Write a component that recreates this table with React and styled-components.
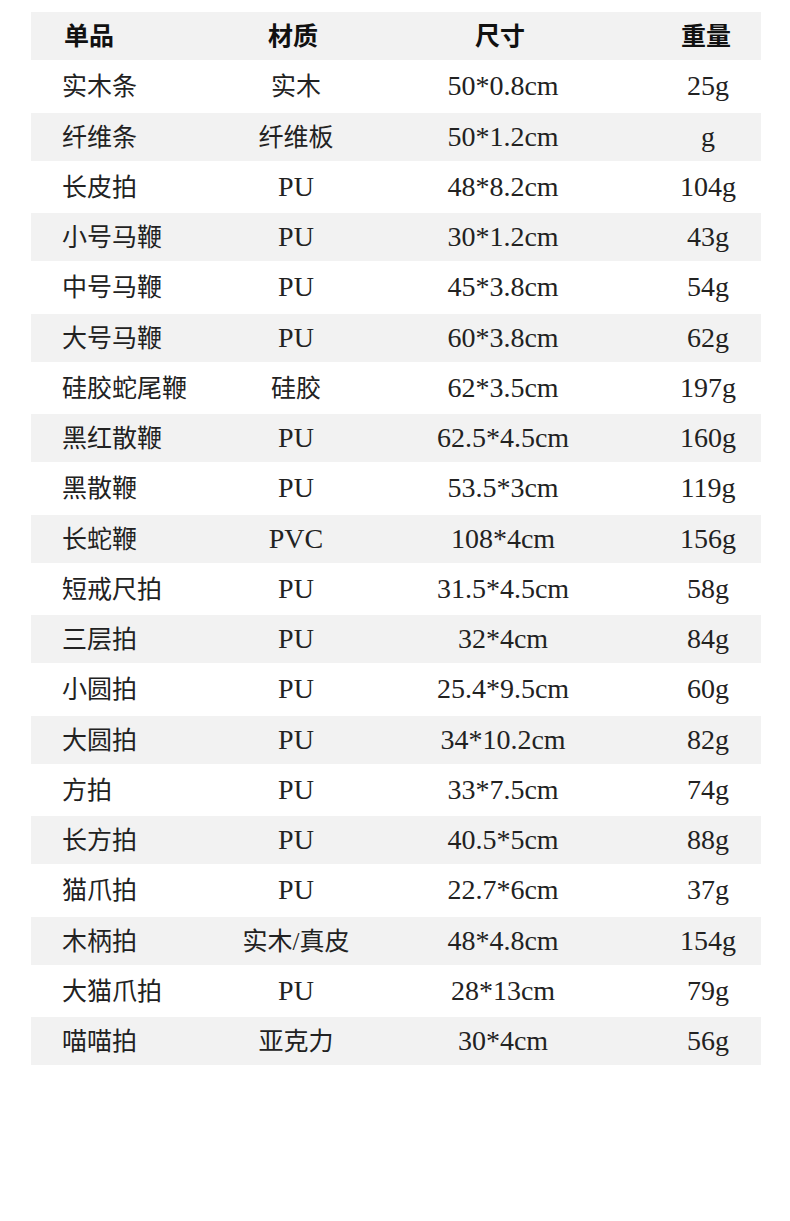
import React from 'react';
import styled, { createGlobalStyle } from 'styled-components';

const GlobalStyle = createGlobalStyle`
    html, body {
        margin: 0;
        padding: 0;
        background: #ffffff;
    }
    body {
        font-family: "Liberation Serif", "Noto Sans CJK SC", serif;
        color: #222222;
    }
`;

const Page = styled.div`
    width: 790px;
    height: 1221px;
    padding: 12px 29px 0 31px;
    box-sizing: border-box;
`;

const Table = styled.div`
    width: 730px;
    display: flex;
    flex-direction: column;
`;

const Row = styled.div`
    display: grid;
    grid-template-columns: 210px 110px 304px 106px;
    align-items: center;
    height: ${props => (props.$shaded ? '48px' : '52.5px')};
    background: ${props => (props.$shaded ? '#f2f2f2' : 'transparent')};
    font-weight: ${props => (props.$head ? 700 : 400)};
    color: ${props => (props.$head ? '#111111' : '#222222')};
`;

const NameCell = styled.div`
    padding-left: ${props => (props.$head ? '33px' : '31px')};
    padding-bottom: 4px;
    font-size: 25px;
    white-space: nowrap;
`;

const Cell = styled.div`
    display: flex;
    justify-content: center;
    white-space: nowrap;
    margin-left: ${props => props.$shift || 0};
    font-size: ${props => (props.$latin ? '28px' : '25px')};
    padding-bottom: ${props => (props.$latin ? '0' : '4px')};
`;

const items = [
    ['实木条', '实木', '50*0.8cm', '25g'],
    ['纤维条', '纤维板', '50*1.2cm', 'g'],
    ['长皮拍', 'PU', '48*8.2cm', '104g'],
    ['小号马鞭', 'PU', '30*1.2cm', '43g'],
    ['中号马鞭', 'PU', '45*3.8cm', '54g'],
    ['大号马鞭', 'PU', '60*3.8cm', '62g'],
    ['硅胶蛇尾鞭', '硅胶', '62*3.5cm', '197g'],
    ['黑红散鞭', 'PU', '62.5*4.5cm', '160g'],
    ['黑散鞭', 'PU', '53.5*3cm', '119g'],
    ['长蛇鞭', 'PVC', '108*4cm', '156g'],
    ['短戒尺拍', 'PU', '31.5*4.5cm', '58g'],
    ['三层拍', 'PU', '32*4cm', '84g'],
    ['小圆拍', 'PU', '25.4*9.5cm', '60g'],
    ['大圆拍', 'PU', '34*10.2cm', '82g'],
    ['方拍', 'PU', '33*7.5cm', '74g'],
    ['长方拍', 'PU', '40.5*5cm', '88g'],
    ['猫爪拍', 'PU', '22.7*6cm', '37g'],
    ['木柄拍', '实木/真皮', '48*4.8cm', '154g'],
    ['大猫爪拍', 'PU', '28*13cm', '79g'],
    ['喵喵拍', '亚克力', '30*4cm', '56g'],
];

const isLatin = text => /^[\x00-\x7f]+$/.test(text);

export default function App() {
    return (
        <Page>
            <GlobalStyle />
            <Table>
                <Row $shaded $head>
                    <NameCell $head>单品</NameCell>
                    <Cell $shift="-6px">材质</Cell>
                    <Cell $shift="-6px">尺寸</Cell>
                    <Cell $shift="-4px">重量</Cell>
                </Row>
                {items.map((item, i) => (
                    <Row key={item[0]} $shaded={i % 2 === 1}>
                        <NameCell>{item[0]}</NameCell>
                        <Cell $latin={isLatin(item[1])}>{item[1]}</Cell>
                        <Cell $latin>{item[2]}</Cell>
                        <Cell $latin>{item[3]}</Cell>
                    </Row>
                ))}
            </Table>
        </Page>
    );
}
